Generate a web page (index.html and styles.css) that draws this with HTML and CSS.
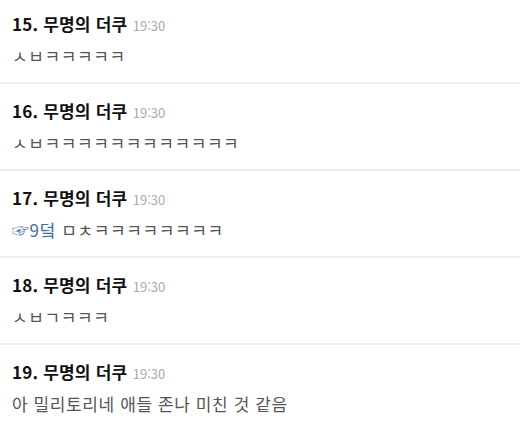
FILE: index.html
```html
<!DOCTYPE html>
<html lang="ko">
<head>
<meta charset="utf-8">
<link rel="stylesheet" href="styles.css">
</head>
<body>
<ul class="comments">
  <li class="comment">
    <div class="head"><span class="name">15. 무명의 더쿠</span> <span class="time">19:30</span></div>
    <div class="body">ㅅㅂㅋㅋㅋㅋㅋ</div>
  </li>
  <li class="comment">
    <div class="head"><span class="name">16. 무명의 더쿠</span> <span class="time">19:30</span></div>
    <div class="body">ㅅㅂㅋㅋㅋㅋㅋㅋㅋㅋㅋㅋㅋㅋ</div>
  </li>
  <li class="comment">
    <div class="head"><span class="name">17. 무명의 더쿠</span> <span class="time">19:30</span></div>
    <div class="body"><a class="ref">☞9덬</a> ㅁㅊㅋㅋㅋㅋㅋㅋㅋㅋ</div>
  </li>
  <li class="comment">
    <div class="head"><span class="name">18. 무명의 더쿠</span> <span class="time">19:30</span></div>
    <div class="body">ㅅㅂㄱㅋㅋㅋ</div>
  </li>
  <li class="comment">
    <div class="head"><span class="name">19. 무명의 더쿠</span> <span class="time">19:30</span></div>
    <div class="body">아 밀리토리네 애들 존나 미친 것 같음</div>
  </li>
</ul>
</body>
</html>
```
FILE: styles.css
```css
html, body {
  margin: 0;
  padding: 0;
  background: #fff;
}
body {
  font-family: "Noto Sans CJK KR", "Noto Sans", sans-serif;
  overflow: hidden;
}
.comments {
  list-style: none;
  margin: -3px 0 0 0;
  padding: 0;
}
.comment {
  padding: 16px 12px 14px;
  border-bottom: 2px solid #ededed;
}
.head {
  line-height: 22px;
  height: 22px;
}
.name {
  font-size: 17px;
  font-weight: 700;
  color: #111;
  letter-spacing: 0.2px;
}
.time {
  font-size: 13px;
  color: #aaa;
  margin-left: 1px;
}
.body {
  margin-top: 9px;
  line-height: 24px;
  font-size: 17px;
  color: #555;
  letter-spacing: 0.6px;
}
.ref {
  color: #3f6f9f;
}
```
